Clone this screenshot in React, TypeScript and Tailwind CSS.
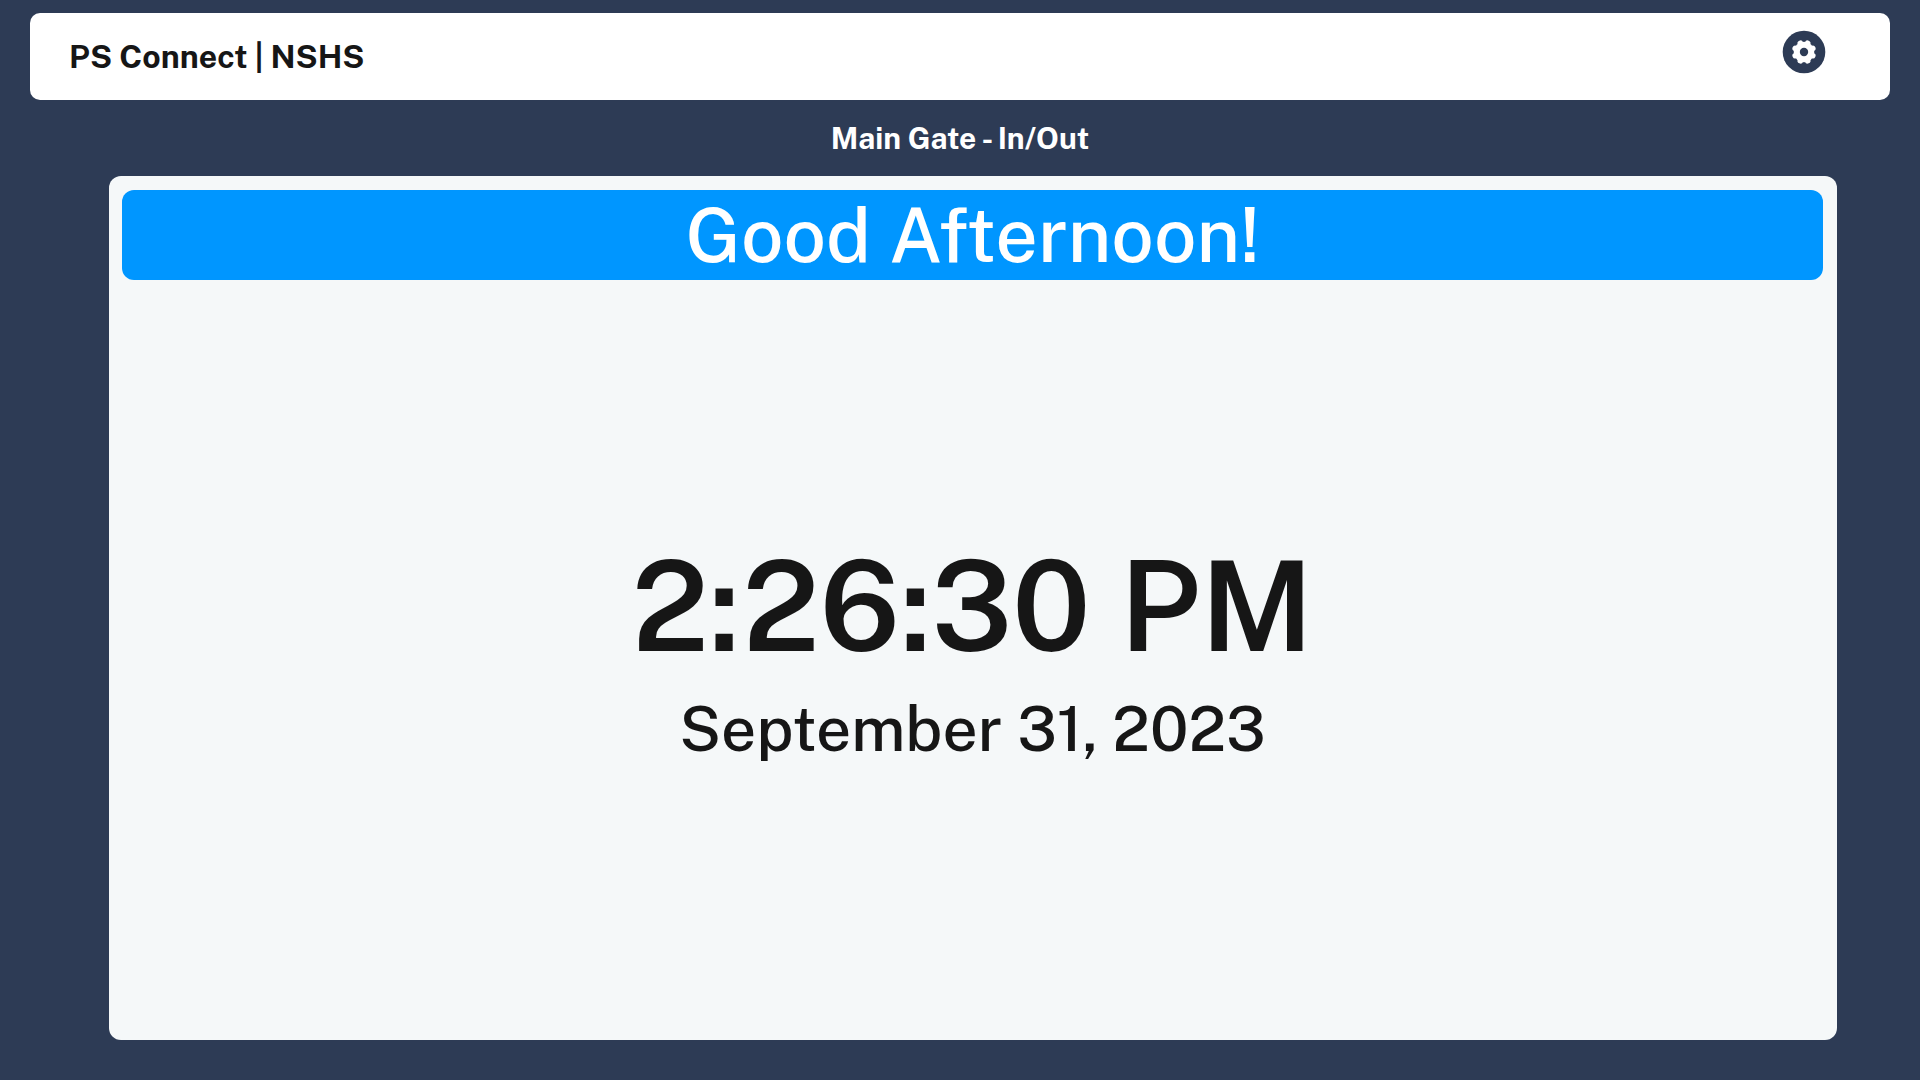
import { useId } from 'react';

const TEETH = [22.5, 67.5, 112.5, 157.5, 202.5, 247.5, 292.5, 337.5];

function GearIcon() {
  const maskId = useId();

  return (
    <svg viewBox="0 0 44 44" fill="none" className="size-11" aria-hidden="true">
      <mask id={maskId}>
        <rect width="44" height="44" fill="white" />
        <circle cx="22" cy="22" r="10.3" fill="black" />
        {TEETH.map((angle) => (
          <circle
            key={angle}
            cx="22"
            cy="12.6"
            r="2.9"
            fill="black"
            transform={`rotate(${angle} 22 22)`}
          />
        ))}
        <circle cx="22" cy="22" r="4.2" fill="white" />
      </mask>
      <circle cx="22" cy="22" r="21.3" fill="#2d3b55" mask={`url(#${maskId})`} />
    </svg>
  );
}

function Header() {
  return (
    <header className="flex h-[87px] items-center justify-between rounded-[10px] bg-white pr-16 pl-[39px]">
      <h1 className="text-[32px] leading-10 font-bold">PS Connect | NSHS</h1>
      <button type="button" aria-label="Settings" className="mb-2.5 cursor-pointer">
        <GearIcon />
      </button>
    </header>
  );
}

export default function App() {
  return (
    <div className="flex min-h-screen flex-col bg-[#2d3b55] px-[30px] pt-[13px] pb-10 font-['Public_Sans','Inter',sans-serif] text-[#161616]">
      <Header />
      <h2 className="py-[18px] text-center text-[30px] leading-10 font-bold text-white">Main Gate - In/Out</h2>
      <main className="mr-[53px] ml-[79px] flex grow flex-col rounded-xl bg-[#f5f8f9] p-3.5 pl-[13px]">
        <p className="rounded-xl bg-[#0096ff] text-center text-[75px] leading-[90px] font-medium text-white">
          Good Afternoon!
        </p>
        <div className="flex grow flex-col items-center justify-center gap-2 pb-1.5 text-center">
          <time className="text-[125px] leading-[150px] font-semibold">2:26:30 PM</time>
          <p className="text-[62px] leading-20 font-medium">September 31, 2023</p>
        </div>
      </main>
    </div>
  );
}
